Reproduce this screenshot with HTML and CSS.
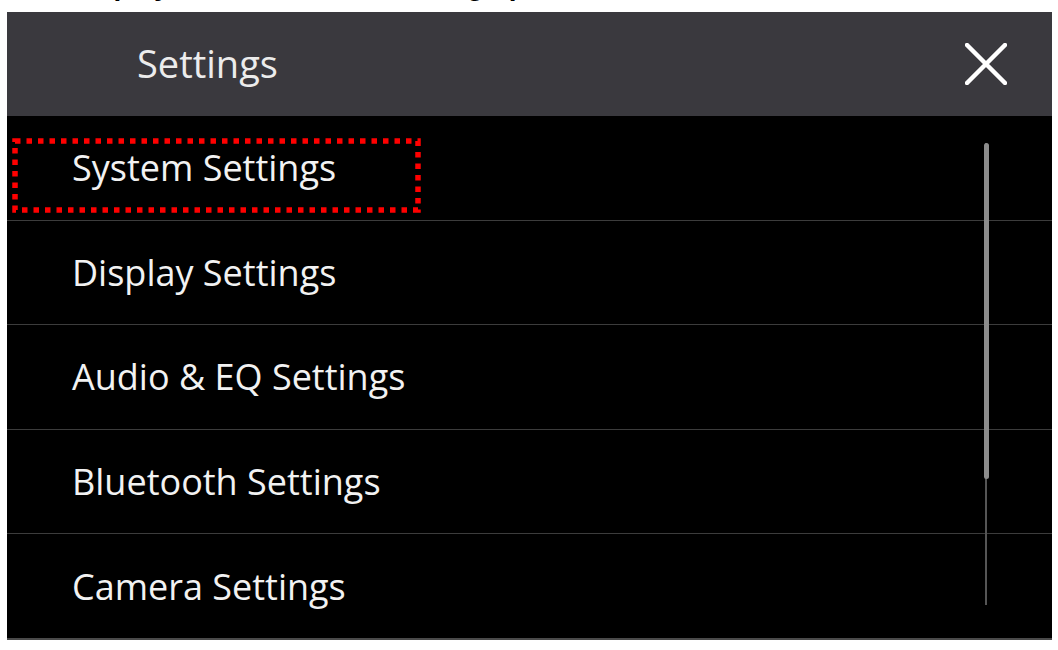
FILE: index.html
```html
<!DOCTYPE html>
<html lang="en">
<head>
    <meta charset="UTF-8">
    <meta name="viewport" content="width=device-width, initial-scale=1.0">
    <title>Settings</title>
    <link rel="stylesheet" href="styles.css">
</head>
<body>
    <div class="doc-title"><span>Display the Initial Menu Setting up</span></div>

    <div class="screen">
        <div class="screen-header">
            <div class="screen-title">Settings</div>
            <svg class="close-btn" width="42" height="42" viewBox="0 0 42 42">
                <path d="M2 2 L40 40 M40 2 L2 40" stroke="#fff" stroke-width="4.5" stroke-linecap="round"/>
            </svg>
        </div>

        <div class="menu">
            <div class="menu-item">
                <span class="menu-label">System Settings</span>
                <svg class="highlight" width="409" height="75" viewBox="0 0 409 75">
                    <rect x="3" y="3" width="403" height="69" fill="none" stroke="#ff0000" stroke-width="5.5" stroke-dasharray="5.5 6"/>
                </svg>
            </div>
            <div class="menu-item"><span class="menu-label">Display Settings</span></div>
            <div class="menu-item"><span class="menu-label">Audio &amp; EQ Settings</span></div>
            <div class="menu-item"><span class="menu-label">Bluetooth Settings</span></div>
            <div class="menu-item"><span class="menu-label">Camera Settings</span></div>

            <div class="scroll-track"></div>
            <div class="scroll-thumb"></div>
        </div>
    </div>
</body>
</html>
```

FILE: styles.css
```css
* {
    margin: 0;
    padding: 0;
    box-sizing: border-box;
}

body {
    background: #fff;
    width: 1058px;
    height: 650px;
    overflow: hidden;
    font-family: "Open Sans", "Noto Sans", sans-serif;
}

/* heading of the manual page, cut off by the screenshot */
.doc-title {
    height: 12px;
    overflow: hidden;
    padding-left: 70px;
}

.doc-title span {
    display: block;
    margin-top: -28px;
    font: bold 28px/28px "Liberation Sans", Arial, sans-serif;
    color: #000;
    white-space: nowrap;
}

.screen {
    margin-left: 7px;
    width: 1045px;
    background: #000;
    border-bottom: 2px solid #4a4a4a;
}

.screen-header {
    height: 104px;
    background: #3a393e;
    display: flex;
    align-items: center;
    justify-content: space-between;
    padding: 0 45px 0 130px;
}

.screen-title {
    color: #ececec;
    font-size: 38px;
    padding-bottom: 2px;
}

.close-btn {
    display: block;
}

.menu {
    position: relative;
    height: 522px;
    display: flex;
    flex-direction: column;
}

.menu-item {
    position: relative;
    flex: 1;
    display: flex;
    align-items: center;
    padding-left: 65px;
    border-top: 1px solid #3c3c3c;
}

.menu-item:first-child {
    border-top: none;
}

.menu-label {
    color: #f2f2f2;
    font-size: 36px;
}

.highlight {
    position: absolute;
    left: 5px;
    top: 22px;
}

.scroll-track {
    position: absolute;
    left: 978px;
    top: 27px;
    width: 2px;
    height: 462px;
    background: #555;
}

.scroll-thumb {
    position: absolute;
    left: 977px;
    top: 27px;
    width: 5px;
    height: 336px;
    border-radius: 3px;
    background: #8c8c8c;
}
```
